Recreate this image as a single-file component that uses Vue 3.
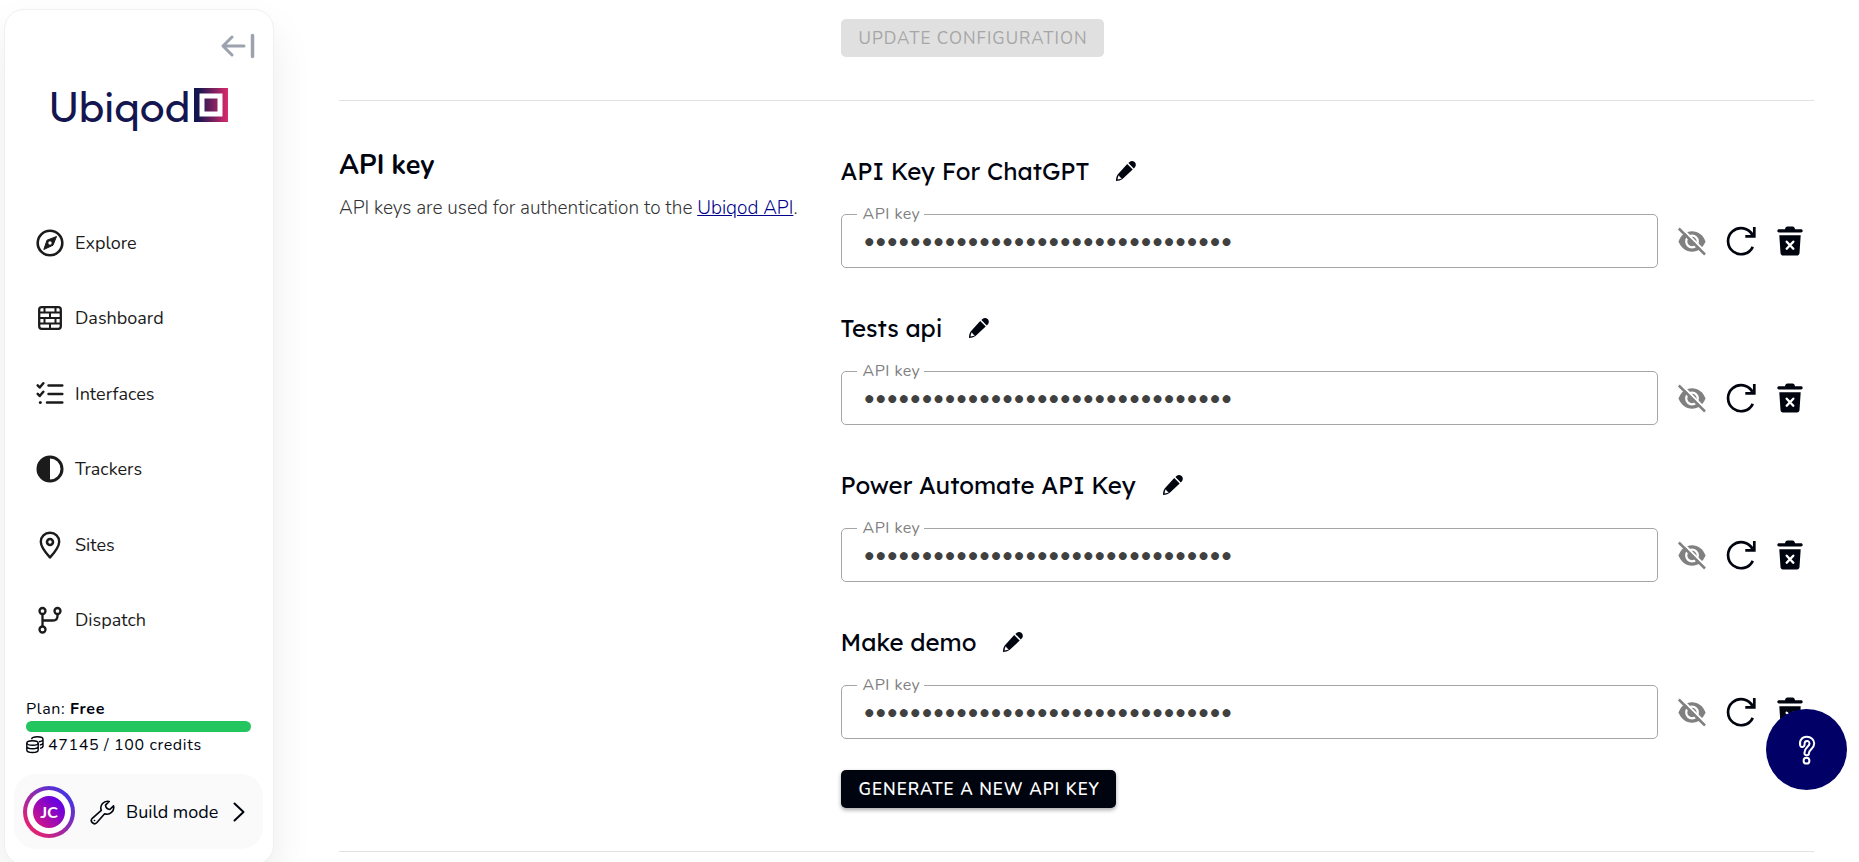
<template>
  <div class="App">
    <aside class="sidebar">
      <button class="sidebar__collapse" type="button" aria-label="Collapse menu">
        <svg width="34" height="26" viewBox="0 0 34 26" fill="none" stroke="#9ca3af" stroke-width="3" stroke-linecap="round" stroke-linejoin="round">
          <path d="M11 4 2 13l9 9M2.500 13H23" />
          <path d="M31.500 2.500v21" stroke-width="3.500" />
        </svg>
      </button>

      <a class="logo" href="#">
        <span class="logo__text">Ubiqod</span>
        <svg class="logo__mark" width="34" height="34" viewBox="0 0 34 34">
          <defs>
            <linearGradient id="logo-gradient" gradientUnits="userSpaceOnUse" x1="4" y1="0" x2="34" y2="0">
              <stop offset="0" stop-color="#141650" />
              <stop offset="1" stop-color="#dc2a6c" />
            </linearGradient>
          </defs>
          <path d="M0 0h34v34H0zM5.500 5.500v23h23v-23zM10.500 10.500h13v13h-13z" fill="url(#logo-gradient)" fill-rule="evenodd" />
        </svg>
      </a>

      <nav class="nav">
        <a v-for="item in navItems" :key="item.label" class="nav__item" href="#">
          <svg v-if="item.icon === 'compass'" class="nav__icon" viewBox="0 0 28 28">
            <circle cx="14" cy="14" r="12.300" fill="none" stroke="currentColor" stroke-width="2.600" />
            <path d="M20.500 7.500 17 16.200 7.800 20.500 11 11.200z" fill="currentColor" stroke="currentColor" stroke-width="1" stroke-linejoin="round" />
            <circle cx="14" cy="14" r="1.700" fill="#fff" />
          </svg>
          <svg v-else-if="item.icon === 'bricks'" class="nav__icon" viewBox="0 0 28 28" fill="none" stroke="currentColor" stroke-width="2">
            <rect x="3.200" y="3.200" width="21.600" height="21.600" rx="2.500" stroke-width="2.300" />
            <path d="M3 8.600h22M3 14h22M3 19.400h22M8.500 3v5.600M19.500 3v5.600M14 8.600V14M8.500 14v5.400M19.500 14v5.400M14 19.400V25" />
          </svg>
          <svg v-else-if="item.icon === 'checks'" class="nav__icon" viewBox="0 0 28 28" fill="none" stroke="currentColor" stroke-width="2.500" stroke-linecap="round" stroke-linejoin="round">
            <path d="m1.700 5.300 2 2.200 3.600-4.300M1.700 13.800l2 2.200 3.600-4.300M12.500 5.500h13.800M12.500 14h13.800M11 22.500h15.300" />
            <circle cx="4.300" cy="22.500" r="1.500" fill="currentColor" stroke="none" />
          </svg>
          <svg v-else-if="item.icon === 'half'" class="nav__icon" viewBox="0 0 28 28">
            <circle cx="14" cy="14" r="12" fill="none" stroke="currentColor" stroke-width="3" />
            <path d="M14 1a13 13 0 0 0 0 26z" fill="currentColor" />
          </svg>
          <svg v-else-if="item.icon === 'pin'" class="nav__icon" viewBox="0 0 28 28" fill="none" stroke="currentColor" stroke-width="2.400" stroke-linejoin="round">
            <path d="M14 1.700c-5.300 0-9.200 3.900-9.200 9C4.800 16.300 10 22 14 26.500c4-4.500 9.200-10.200 9.200-15.800 0-5.100-3.900-9-9.200-9z" />
            <circle cx="14" cy="11" r="3" stroke-width="2.600" />
          </svg>
          <svg v-else class="nav__icon" viewBox="0 0 28 28" fill="none" stroke="currentColor" stroke-width="2.300">
            <circle cx="6.500" cy="5" r="3" />
            <circle cx="21.500" cy="5" r="3" />
            <circle cx="6.500" cy="23.500" r="3" />
            <path d="M6.500 8v12.500M21.500 8v2c0 3-1.500 4.500-4.500 4.500H6.500" />
          </svg>
          {{ item.label }}
        </a>
      </nav>

      <div class="plan">
        <p class="plan__name">Plan: <strong>Free</strong></p>
        <div class="plan__bar"></div>
        <p class="plan__credits">
          <svg width="18" height="18" viewBox="0 0 18 18" fill="none" stroke="currentColor" stroke-width="1.400">
            <ellipse cx="6.500" cy="7" rx="5.700" ry="2.300" />
            <path d="M.8 7v7c0 1.300 2.500 2.500 5.700 2.500s5.700-1.200 5.700-2.500V7M.8 10.300c0 1.400 2.500 2.500 5.700 2.500s5.700-1.100 5.700-2.500M5.500 3.200C6 1.700 8.500.8 11.300.8c3.200 0 5.700 1.100 5.700 2.500s-1.500 2.200-4 2.500M17 3.300V10c0 1-1.200 2-3 2.400M17 6.700c0 1.200-1.300 2-3.200 2.300" />
          </svg>
          47145 / 100 credits
        </p>
      </div>

      <button class="profile" type="button">
        <span class="avatar"><span class="avatar__ring"><span class="avatar__initials">JC</span></span></span>
        <svg class="profile__wrench" width="26" height="26" viewBox="0 0 24 24" fill="none" stroke="currentColor" stroke-width="1.500" stroke-linejoin="round">
          <path d="M21.700 6.300a6.200 6.200 0 0 1-8.200 7.300L6.200 21.900a2.900 2.900 0 0 1-4.100-4.100l8.300-7.300a6.200 6.200 0 0 1 7.300-8.200l-3.400 3.400c.2 1.900 1.100 3.600 4 4z" />
          <path d="M4.100 19.900h.1" stroke-linecap="round" />
        </svg>
        <span class="profile__mode">Build mode</span>
        <svg class="profile__chevron" width="12" height="20" viewBox="0 0 12 20" fill="none" stroke="currentColor" stroke-width="2" stroke-linecap="round" stroke-linejoin="round">
          <path d="m1.500 1.500 9 8.500-9 8.500" />
        </svg>
      </button>
    </aside>

    <main class="content">
      <section class="section section--first">
        <div class="section__body">
          <button class="btn" type="button" disabled>Update configuration</button>
        </div>
      </section>

      <section class="section">
        <div class="section__intro">
          <h2>API key</h2>
          <p>API keys are used for authentication to the <a href="#">Ubiqod API</a>.</p>
        </div>

        <div class="section__body">
          <div class="keys">
            <div v-for="key in apiKeys" :key="key.id" class="key">
              <div class="key__title">
                <h3>{{ key.name }}</h3>
                <button class="icon-btn icon-btn--small" type="button" aria-label="Rename">
                  <svg width="22" height="22" viewBox="0 0 22 22" fill="currentColor">
                    <path fill-rule="evenodd" d="M12.200 4.100 17.700 9.600 7.500 19.100c-1.800 1.300-4 1.900-6.500 1.900 0-2.500.4-4.700 1.700-6.500zM3.900 15.300c-.8 1-1.100 2.200-1.300 4.100 2-.2 3.200-.5 4.200-1.200-1.400-.5-2.400-1.400-2.900-2.900z" />
                    <path d="m13.400 3 1.400-1.200c1.500-1.200 3.400-1 4.800.3s1.700 3.400.5 4.900l-1.300 1.500z" />
                  </svg>
                </button>
              </div>
              <div class="key__row">
                <div class="field">
                  <label class="field__label" :for="key.id">API key</label>
                  <input :id="key.id" v-model="key.value" class="field__input" :type="key.visible ? 'text' : 'password'" readonly>
                </div>
                <button class="icon-btn icon-btn--muted" type="button" aria-label="Show key" @click="key.visible = !key.visible">
                  <svg width="29" height="29" viewBox="0 0 29 29">
                    <path d="M1.500 14.500C4 8 9 4.300 15 4.300S26 8 28.500 14.500C26 21 21 24.700 15 24.700S4 21 1.500 14.500z" fill="currentColor" />
                    <circle cx="15" cy="14.500" r="5.800" fill="none" stroke="#fff" stroke-width="2.200" />
                    <path d="M3.500 0 30 26.500" stroke="#fff" stroke-width="2.200" />
                    <path d="m1.800 1.500 26.200 26" stroke="currentColor" stroke-width="2.500" />
                  </svg>
                </button>
                <button class="icon-btn" type="button" aria-label="Regenerate key">
                  <svg width="30" height="30" viewBox="0 0 30 30" fill="none" stroke="currentColor" stroke-width="2.700">
                    <path d="M26.800 20.800A13 13 0 1 1 26.500 9" />
                    <path d="M28.300 1v9.300h-9" />
                  </svg>
                </button>
                <button class="icon-btn" type="button" aria-label="Delete key">
                  <svg width="26" height="30" viewBox="0 0 26 30">
                    <path d="M2 3.200h6c.4-1.600 1-2.700 2.500-2.700h5c1.500 0 2.100 1.100 2.500 2.700h6c1 0 1.700.7 1.700 1.600S25 6.400 24 6.400H2C1 6.400.3 5.700.3 4.800S1 3.200 2 3.200zM2.300 9.300h21.400L22.500 27c-.1 1.500-1 2.500-2.500 2.500H6C4.500 29.500 3.600 28.500 3.500 27z" fill="currentColor" />
                    <path d="m9.700 15.700 6.600 7M16.300 15.700l-6.600 7" stroke="#fff" stroke-width="2.400" stroke-linecap="round" />
                  </svg>
                </button>
              </div>
            </div>
          </div>
          <button class="btn btn--primary" type="button">Generate a new API key</button>
        </div>
      </section>

      <section class="section"></section>
    </main>

    <button class="help" type="button" aria-label="Help">
      <svg width="18" height="30" viewBox="0 0 18 30" fill="none" stroke="#fff" stroke-width="2" stroke-linejoin="round">
        <path d="M2.200 10.500C1 5.500 4 1.800 8.700 1.800c4.400 0 7.500 2.800 7.500 6.600 0 5.500-5.200 5.800-5.200 9.600 0 3-4.600 3.200-4.600 0 0-5.800 5.100-6.200 5.100-9.400 0-3.600-5-3.300-4.900.3.200 3.500-3.700 4-4.400 1.600z" />
        <circle cx="8.500" cy="25.700" r="2.900" />
      </svg>
    </button>
  </div>
</template>

<script setup>
import { ref } from 'vue';

const navItems = [
  { label: 'Explore', icon: 'compass' },
  { label: 'Dashboard', icon: 'bricks' },
  { label: 'Interfaces', icon: 'checks' },
  { label: 'Trackers', icon: 'half' },
  { label: 'Sites', icon: 'pin' },
  { label: 'Dispatch', icon: 'branch' },
];

const names = ['API Key For ChatGPT', 'Tests api', 'Power Automate API Key', 'Make demo'];

const apiKeys = ref(names.map((name, index) => ({
  id: `api-key-${index}`,
  name,
  value: '0'.repeat(32),
  visible: false,
})));
</script>

<style>
body {
  background: #fff;
}
</style>

<style scoped>
.App {
  display: flex;
  height: 100vh;
  overflow: hidden;
  font-family: Nunito, Lato, sans-serif;
  font-size: 18px;
  color: #00040f;
}

.App *,
.App *::before {
  box-sizing: border-box;
}

h2,
h3,
p {
  margin: 0;
}

button {
  padding: 0;
  border: 0;
  background: none;
  color: inherit;
  font: inherit;
  cursor: pointer;
}

svg {
  display: block;
  flex-shrink: 0;
}

/* Sidebar */
.sidebar {
  display: flex;
  flex-direction: column;
  flex-shrink: 0;
  width: 270px;
  height: calc(100vh - 6px);
  margin: 9px 0 0 4px;
  padding: 23px 10px 15px 9px;
  border: 1px solid #f0f0f0;
  border-radius: 20px;
  background: #fff;
  box-shadow: 0 20px 40px rgba(0, 0, 0, 0.08);
}

.sidebar__collapse {
  align-self: flex-end;
  margin-right: 8px;
}

.logo {
  display: flex;
  gap: 4px;
  align-self: center;
  align-items: flex-start;
  margin-top: 29px;
  color: #141650;
  text-decoration: none;
}

.logo__text {
  font-family: Outfit, Lato, sans-serif;
  font-size: 44px;
  line-height: 36px;
}

.nav {
  display: flex;
  flex: 1;
  flex-direction: column;
  justify-content: space-between;
  margin: 95px 0 53px;
}

.nav__item {
  display: flex;
  gap: 11px;
  align-items: center;
  height: 48px;
  padding-left: 22px;
  color: #1b1b1b;
  text-decoration: none;
}

.nav__icon {
  width: 28px;
  height: 28px;
}

.plan {
  padding: 0 12px;
  font-size: 16px;
  letter-spacing: 0.04em;
}

.plan__name {
  line-height: 24px;
}

.plan__bar {
  height: 11px;
  border-radius: 6px;
  background: #22c55e;
}

.plan__credits {
  display: flex;
  gap: 4px;
  align-items: center;
  line-height: 26px;
}

.profile {
  display: flex;
  align-items: center;
  height: 75px;
  margin-top: 16px;
  padding: 0 18px 0 9px;
  border-radius: 22px;
  background: #fafafa;
}

.avatar {
  padding: 4px;
  border-radius: 50%;
  background: linear-gradient(45deg, #f0206a 10%, #3a35ea 90%);
}

.avatar__ring {
  display: block;
  padding: 6px;
  border-radius: 50%;
  background: #fff;
}

.avatar__initials {
  display: block;
  width: 32px;
  height: 32px;
  border-radius: 50%;
  background: linear-gradient(45deg, #e0187a, #6a00e0 80%);
  color: #fff;
  font-family: Lato, sans-serif;
  font-size: 16px;
  font-weight: 700;
  line-height: 32px;
}

.profile__wrench {
  margin: 0 10px 0 15px;
}

.profile__chevron {
  margin-left: auto;
}

/* Content */
.content {
  flex: 1;
  min-width: 0;
  padding: 19px 45px 0 65px;
}

.section {
  display: grid;
  grid-template-columns: 34fr 66fr;
  padding: 43px 0;
  border-top: 1px solid #e2e2e2;
}

.section--first {
  padding-top: 0;
  border-top: 0;
}

.section__body {
  grid-column: 2;
}

.section__intro h2 {
  font-size: 27px;
  font-weight: 700;
  line-height: 44px;
}

.section__intro p {
  margin-top: 6px;
  color: #333;
  font-size: 19px;
  font-weight: 300;
  line-height: 28px;
}

.section__intro a {
  color: #00008b;
}

.btn {
  height: 38px;
  padding: 0 16px 0 18px;
  border-radius: 5px;
  font-size: 17px;
  letter-spacing: 0.06em;
  text-transform: uppercase;
}

.btn:disabled {
  background: #e0e0e0;
  color: #a6a6a6;
  cursor: default;
}

.btn--primary {
  margin-top: 31px;
  background: #00040f;
  box-shadow: 0 2px 4px rgba(0, 0, 0, 0.35);
  color: #fff;
  font-weight: 600;
}

.keys {
  display: grid;
  gap: 33px;
}

.key__title {
  display: flex;
  gap: 26px;
  align-items: center;
  height: 54px;
  margin-bottom: 16px;
}

.key__title h3 {
  font-family: Lexend, Outfit, Inter, sans-serif;
  font-size: 24px;
  font-weight: 400;
  line-height: 32px;
}

.key__row {
  display: flex;
  align-items: center;
}

.field {
  position: relative;
  flex: 1;
  margin-right: 9px;
}

.field__label {
  position: absolute;
  top: -10px;
  left: 16px;
  padding: 0 4px 0 6px;
  background: #fff;
  color: #808080;
  font-size: 16px;
  line-height: 20px;
  letter-spacing: 0.03em;
}

.field__input {
  display: block;
  width: 100%;
  height: 54px;
  padding: 0 22px;
  border: 1px solid #a6a6a6;
  border-radius: 5px;
  background: transparent;
  color: #404040;
  font-family: Nunito, Lato, sans-serif;
  font-size: 22px;
  outline: none;
}

.icon-btn {
  display: flex;
  align-items: center;
  justify-content: center;
  width: 49px;
  height: 48px;
}

.icon-btn--small {
  width: 22px;
  height: 22px;
}

.icon-btn--muted {
  color: #808080;
}

/* Floating help launcher */
.help {
  position: fixed;
  right: 12px;
  bottom: 72px;
  display: flex;
  align-items: center;
  justify-content: center;
  width: 81px;
  height: 81px;
  border-radius: 50%;
  background: #000066;
}
</style>
